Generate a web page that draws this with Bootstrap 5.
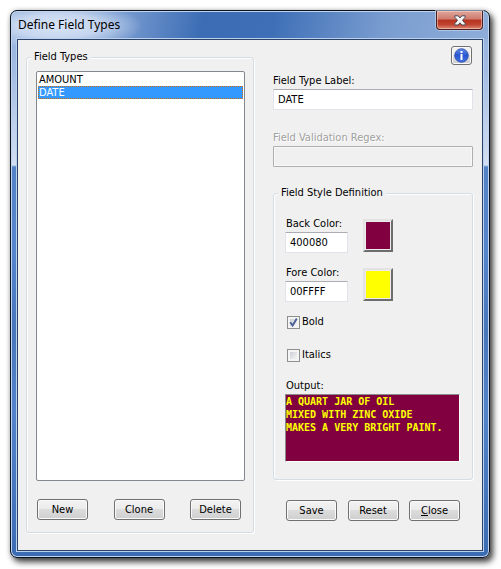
<!DOCTYPE html>
<html lang="en">
<head>
<meta charset="utf-8">
<meta name="viewport" content="width=device-width, initial-scale=1">
<title>Define Field Types</title>
<link href="https://cdn.jsdelivr.net/npm/bootstrap@5.3.0/dist/css/bootstrap.min.css" rel="stylesheet">
<style>
body { font: 11px/14px "DejaVu Sans Condensed", "DejaVu Sans", sans-serif; color: #000; background: #fff; padding: 10px 11px 11px 10px; }
.win {
  border: 1px solid #08121f; border-radius: 7px; padding: 0 6px 6px;
  box-shadow: inset 0 0 0 1px #c3d5ee, 3px 4px 6px 0 rgba(0,0,0,.75), 0 0 5px rgba(0,0,0,.2);
  background:
    radial-gradient(ellipse 84px 24px at 48px 15px, rgba(226,236,250,.9) 0, rgba(220,231,248,.75) 50%, rgba(220,231,248,0) 100%) no-repeat,
    linear-gradient(100deg, #8fadda 0, #7196cd 25%, #3c6db4 40%, #3f70b7 55%, #7a9dd0 78%, #8eadd9 100%) 0 0 / 100% 28px no-repeat,
    linear-gradient(#8eadd9 0, #a3bce3 60px, #d3dff2 154px, #5482c6 156px, #5585cb 240px, #4776bb 320px, #5383c8 400px, #3b6bb0 100%);
}
.titlebar { height: 28px; font: 12px/16px "Noto Sans", "Open Sans", sans-serif; }
.titlebar .caption { padding: 6px 0 0 1px; }
.win-close {
  width: 47px; height: 19px; padding: 0; border: 1px solid #4a1f22; border-top: 0; border-radius: 0 0 4px 4px;
  background: linear-gradient(#e0a79c 0, #cf7a6c 45%, #b5331f 50%, #c04330 75%, #dc8a74 100%);
  box-shadow: inset 0 0 0 1px rgba(255,220,210,.5), 0 0 0 1px rgba(200,218,242,.6);
}
.client { background: #f0f0f0; border: 1px solid #2a436b; box-shadow: 0 0 0 1px #bdd0ec; padding: 6px 9px 17px 8px; gap: 19px; }
.pane-left { flex: 228 1 0; padding-top: 4px; }
.pane-right { flex: 200 1 0; }
.group { border: 1px solid #d3dde5; border-radius: 3px; box-shadow: 1px 1px 0 #fff, inset 1px 1px 0 #fff; }
.group > legend { float: none; width: auto; font-size: 11px; line-height: 14px; height: 14px; margin: 0 0 0 4px; padding: 0 3px; background: #f0f0f0; }
.listbox { height: 410px; padding: 1px; border: 1px solid #828790; background: #fff; overflow: hidden; outline: 0; font: inherit; color: #000; }
.listbox option { padding: 0 1px; min-height: 13px; line-height: 13px; height: 13px; }
.listbox option:checked { background: #39f linear-gradient(#39f, #39f); color: #fff; outline: 1px dotted #d06a10; outline-offset: -1px; }
.cmd {
  width: 51px; height: 21px; padding: 0; font: inherit; line-height: 17px; color: #000; border: 1px solid #707070; border-radius: 3px;
  background: linear-gradient(#f3f3f3 0, #ebebeb 48%, #dcdcdc 50%, #cfcfcf 100%); box-shadow: inset 0 0 0 1px #fafafa;
}
.info { width: 21px; height: 19px; }
.info-bar { padding-right: 1px; }
.field { display: block; height: 21px; padding: 0 4px; font: inherit; color: #000; background: #fff; border: 1px solid #e2e3ea; border-top-color: #abadb3; border-radius: 1px; }
.field:disabled { background: #f0f0f0; border-color: #afafaf; box-shadow: inset 0 0 0 1px #f8f8f8; }
.field-label { display: block; height: 16px; line-height: 16px; }
.group-style .field-label { padding-left: 1px; }
.muted { color: #a0a0a0; text-shadow: 1px 1px 0 #fff; }
.color-field { width: 63px; }
.swatch { width: 30px; height: 33px; margin-top: 3px; padding: 0; border: 2px solid; border-color: #e3e3e3 #6d6d6d #6d6d6d #e3e3e3; box-shadow: inset 0 0 0 1px #ececec; }
.swatch-back { background: #800040; }
.swatch-fore { background: #ff0; }
.tick {
  appearance: none; width: 13px; height: 13px; margin: 0; border: 1px solid #8e8f8f;
  background: linear-gradient(135deg, #cbcfd5, #f6f6f6) content-box, #f4f4f4; padding: 2px;
}
.tick:checked {
  background: url("data:image/svg+xml,%3Csvg xmlns='http://www.w3.org/2000/svg' viewBox='0 0 11 11'%3E%3Cpath d='M2.2 5.2 4.6 8.6 8.8 1.6' fill='none' stroke='%234a5f97' stroke-width='1.9'/%3E%3C/svg%3E") border-box center / 11px 11px no-repeat, linear-gradient(135deg, #cbcfd5, #f6f6f6) content-box, #f4f4f4;
}
.tick-row { gap: 2px; height: 14px; padding-left: 2px; }
.tick-first { margin-top: 13px; }
.tick-next { margin-top: 19px; }
.sample { height: 68px; display: block; resize: none; overflow: hidden; padding: 0; border: 1px solid #fff; border-top-color: #8a8a8a; border-left-color: #8a8a8a; background: #800040; color: #ff0; font: bold 10px/13px "DejaVu Sans Mono", monospace; }
.list-cmds { padding: 18px 4px 12px 1px; }
.list-body { padding: 7px 8px 0 9px; }
.style-body { padding: 16px 12px 17px 11px; }
.group-style { margin-top: 19px; }
.gap-label { margin-top: 8px; }
.gap-regex { margin-top: 20px; }
.color-row { gap: 15px; }
.dialog-cmds { padding: 20px 13px 0 13px; }
</style>
</head>
<body>
<main class="win">
  <header class="titlebar d-flex justify-content-between align-items-start">
    <div class="caption">Define Field Types</div>
    <button class="win-close d-flex justify-content-center align-items-center" type="button" aria-label="Close window">
      <svg width="12" height="11" viewBox="0 0 12 11"><path d="M.8.8h3.400L6 3 7.800.8h3.400v1.400L8.500 5.300l2.700 3.300V10H7.800L6 7.800 4.200 10H.8V8.600l2.700-3.300L.8 2.200z" fill="#f6f6f6" stroke="#4d4654" stroke-width="1"/></svg>
    </button>
  </header>
  <form class="client d-flex align-items-start">
    <div class="pane-left">
      <fieldset class="group">
        <legend>Field Types</legend>
        <div class="list-body">
          <select class="listbox w-100 d-block" size="10" aria-label="Field Types">
            <option>AMOUNT</option>
            <option selected>DATE</option>
          </select>
          <div class="list-cmds d-flex justify-content-between">
            <button class="cmd" type="button">New</button>
            <button class="cmd" type="button">Clone</button>
            <button class="cmd" type="button">Delete</button>
          </div>
        </div>
      </fieldset>
    </div>
    <div class="pane-right">
      <div class="info-bar d-flex justify-content-end">
        <button class="cmd info d-flex justify-content-center align-items-center" type="button" aria-label="Information">
          <svg width="15" height="15" viewBox="0 0 15 15">
            <defs><linearGradient id="ball" x2="0" y2="1"><stop stop-color="#5f8bea"/><stop offset=".5" stop-color="#2a55cf"/><stop offset="1" stop-color="#3f74e6"/></linearGradient></defs>
            <circle cx="7.500" cy="7.500" r="6.800" fill="url(#ball)" stroke="#2b49a8" stroke-width=".8"/>
            <path d="M6.500 3h2v2h-2zM6.500 6h2v6h-2z" fill="#fff"/>
          </svg>
        </button>
      </div>
      <div class="gap-label">
        <label class="field-label" for="typeLabel">Field Type Label:</label>
        <input class="field w-100" id="typeLabel" type="text" value="DATE">
      </div>
      <div class="gap-regex">
        <label class="field-label muted" for="regex">Field Validation Regex:</label>
        <input class="field w-100" id="regex" type="text" disabled>
      </div>
      <fieldset class="group group-style">
        <legend>Field Style Definition</legend>
        <div class="style-body">
          <div class="color-row d-flex align-items-start">
            <div>
              <label class="field-label" for="backColor">Back Color:</label>
              <input class="field color-field" id="backColor" type="text" value="400080">
            </div>
            <button class="swatch swatch-back" type="button" aria-label="Choose back color"></button>
          </div>
          <div class="color-row d-flex align-items-start pt-2 mt-1">
            <div>
              <label class="field-label" for="foreColor">Fore Color:</label>
              <input class="field color-field" id="foreColor" type="text" value="00FFFF">
            </div>
            <button class="swatch swatch-fore" type="button" aria-label="Choose fore color"></button>
          </div>
          <div class="tick-row tick-first d-flex align-items-center">
            <input class="tick" id="bold" type="checkbox" checked><label for="bold">Bold</label>
          </div>
          <div class="tick-row tick-next d-flex align-items-center">
            <input class="tick" id="italics" type="checkbox"><label for="italics">Italics</label>
          </div>
          <div class="mt-3">
            <label class="field-label" for="output">Output:</label>
            <textarea class="sample w-100" id="output" readonly>A QUART JAR OF OIL
MIXED WITH ZINC OXIDE
MAKES A VERY BRIGHT PAINT.</textarea>
          </div>
        </div>
      </fieldset>
      <div class="dialog-cmds d-flex justify-content-between">
        <button class="cmd" type="button">Save</button>
        <button class="cmd" type="button">Reset</button>
        <button class="cmd" type="button"><u>C</u>lose</button>
      </div>
    </div>
  </form>
</main>
<script src="https://cdn.jsdelivr.net/npm/bootstrap@5.3.0/dist/js/bootstrap.bundle.min.js"></script>
</body>
</html>
